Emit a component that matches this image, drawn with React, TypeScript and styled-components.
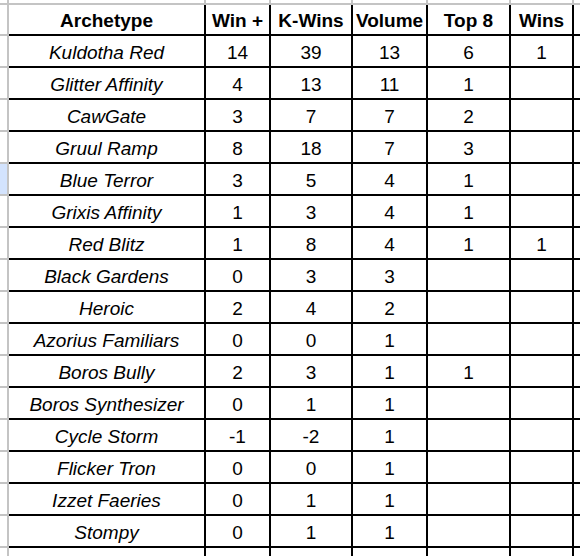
import React from 'react';
import styled, { createGlobalStyle, css } from 'styled-components';

const GlobalStyle = createGlobalStyle`
  html, body {
    margin: 0;
    padding: 0;
    background: #ffffff;
    overflow: hidden;
  }
  body {
    font-family: "Liberation Sans", Arial, sans-serif;
    color: #000000;
  }
`;

// sheet grid: row-header strip + 7 columns, the last one cut off by the window
const Sheet = styled.div`
  display: grid;
  grid-template-columns: 9px 197px 65px 82px 75px 83px 63px 80px;
  grid-template-rows: 5px 31px;
  grid-auto-rows: 32px;
  width: 580px;
  height: 556px;
  overflow: hidden;
`;

const grayEdge = '#c4c4c4';

const Corner = styled.div`
  box-sizing: border-box;
  border-right: 2px solid ${grayEdge};
  border-bottom: 2px solid ${grayEdge};
  background: #ffffff;
`;

const ColHeader = styled.div`
  box-sizing: border-box;
  border-right: 2px solid ${grayEdge};
  border-bottom: 2px solid ${grayEdge};
  background: #ffffff;
`;

const RowHeader = styled.div<{ $selected?: boolean }>`
  box-sizing: border-box;
  border-right: 2px solid ${grayEdge};
  border-bottom: 2px solid ${grayEdge};
  background: ${(p) => (p.$selected ? '#d3e3fd' : '#ffffff')};
`;

const cellBase = css`
  box-sizing: border-box;
  border-right: 2px solid #000000;
  border-bottom: 2px solid #000000;
  display: flex;
  align-items: flex-end;
  justify-content: center;
  padding: 0 0 2px;
  font-size: 19px;
  line-height: normal;
  white-space: nowrap;
  overflow: hidden;
`;

const HeaderCell = styled.div`
  ${cellBase}
  font-weight: bold;
`;

const Cell = styled.div<{ $name?: boolean }>`
  ${cellBase}
  font-style: ${(p) => (p.$name ? 'italic' : 'normal')};
`;

const headers = ['Archetype', 'Win +', 'K-Wins', 'Volume', 'Top 8', 'Wins', 'Win %'];

type Row = [string, string, string, string, string, string];

const rows: Row[] = [
  ['Kuldotha Red', '14', '39', '13', '6', '1'],
  ['Glitter Affinity', '4', '13', '11', '1', ''],
  ['CawGate', '3', '7', '7', '2', ''],
  ['Gruul Ramp', '8', '18', '7', '3', ''],
  ['Blue Terror', '3', '5', '4', '1', ''],
  ['Grixis Affinity', '1', '3', '4', '1', ''],
  ['Red Blitz', '1', '8', '4', '1', '1'],
  ['Black Gardens', '0', '3', '3', '', ''],
  ['Heroic', '2', '4', '2', '', ''],
  ['Azorius Familiars', '0', '0', '1', '', ''],
  ['Boros Bully', '2', '3', '1', '1', ''],
  ['Boros Synthesizer', '0', '1', '1', '', ''],
  ['Cycle Storm', '-1', '-2', '1', '', ''],
  ['Flicker Tron', '0', '0', '1', '', ''],
  ['Izzet Faeries', '0', '1', '1', '', ''],
  ['Stompy', '0', '1', '1', '', ''],
  ['', '', '', '', '', ''],
];

const App: React.FC = () => {
  return (
    <>
      <GlobalStyle />
      <Sheet>
        {/* column header strip, mostly scrolled away */}
        <Corner />
        {headers.map((h) => (
          <ColHeader key={'c' + h} />
        ))}

        {/* title row */}
        <RowHeader />
        {headers.map((h) => (
          <HeaderCell key={h}>{h}</HeaderCell>
        ))}

        {rows.map((r, i) => (
          <React.Fragment key={i}>
            <RowHeader $selected={r[0] === 'Blue Terror'} />
            {r.map((v, j) => (
              <Cell key={j} $name={j === 0}>
                {v}
              </Cell>
            ))}
            <Cell />
          </React.Fragment>
        ))}
      </Sheet>
    </>
  );
};

export default App;
